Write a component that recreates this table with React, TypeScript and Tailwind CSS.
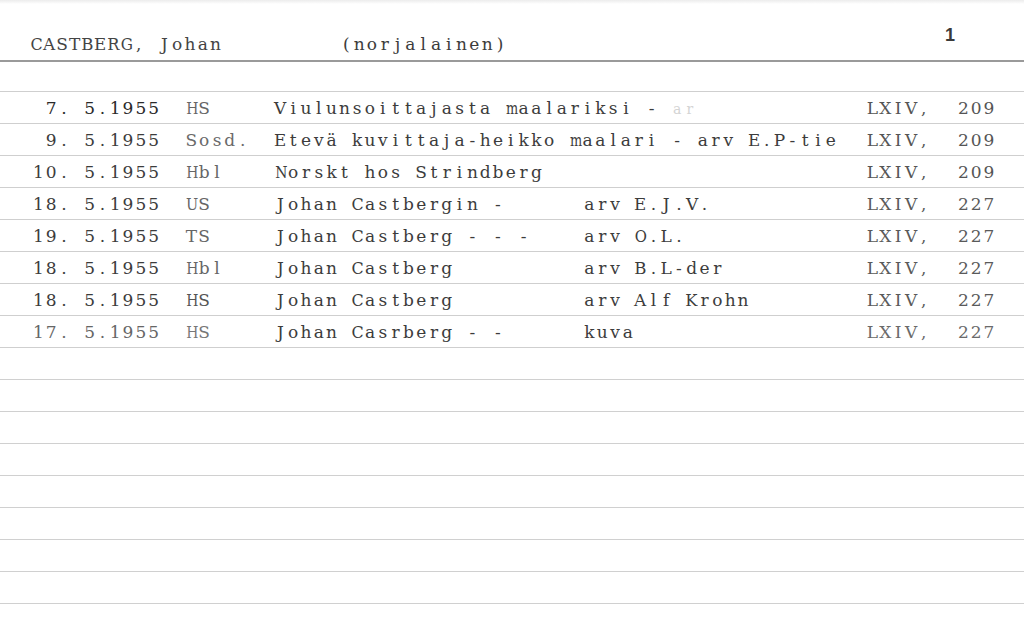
import React from "react";

const FONT_FAMILY = '"DejaVu Serif", "Liberation Serif", serif';
const serif = { fontFamily: FONT_FAMILY };

let ctx: CanvasRenderingContext2D | null = null;
const cache = new Map<string, number>();
function glyphWidth(c: string, size: number): number {
  const key = c + size;
  const hit = cache.get(key);
  if (hit !== undefined) return hit;
  if (!ctx && typeof document !== "undefined") {
    ctx = document.createElement("canvas").getContext("2d");
  }
  let w = size * 0.6;
  if (ctx) {
    ctx.font = `${size}px ${FONT_FAMILY}`;
    w = ctx.measureText(c).width;
  }
  cache.set(key, w);
  return w;
}

// typewriter-style fixed pitch: every character sits in a 12.8px cell
function T({ s, className, size = 17 }: { s: string; className?: string; size?: number }) {
  return (
    <span className={className}>
      {Array.from(s).map((c, i) => {
        const w = glyphWidth(c, size);
        const k = w > 12.2 ? 12.2 / w : 1;
        return (
          <span key={i} className="inline-block w-[12.8px] text-center">
            <span className="inline-block" style={k < 1 ? { transform: `scaleX(${k})` } : undefined}>
              {c}
            </span>
          </span>
        );
      })}
    </span>
  );
}

type Row = {
  date: string;
  src: string;
  title: string;
  faint?: string;
  arv?: string;
  vol: string;
  page: string;
  dateC?: string;
  srcC?: string;
  volC?: string;
};

const rows: Row[] = [
  { date: "7. 5.1955", src: "HS", title: "Viulunsoittajasta maalariksi - ", faint: "ar", vol: "LXIV,", page: "209", dateC: "text-[#2a2a2a]", srcC: "text-[#666]" },
  { date: "9. 5.1955", src: "Sosd.", title: "Etevä kuvittaja-heikko maalari - arv E.P-tie", vol: "LXIV,", page: "209", srcC: "text-[#6a6a6a]" },
  { date: "10. 5.1955", src: "Hbl", title: "Norskt hos Strindberg", vol: "LXIV,", page: "209", srcC: "text-[#666]" },
  { date: "18. 5.1955", src: "US", title: "Johan Castbergin -", arv: "arv E.J.V.", vol: "LXIV,", page: "227", srcC: "text-[#666]", volC: "text-[#5a5a5a]" },
  { date: "19. 5.1955", src: "TS", title: "Johan Castberg - - -", arv: "arv O.L.", vol: "LXIV,", page: "227", srcC: "text-[#666]", volC: "text-[#5a5a5a]" },
  { date: "18. 5.1955", src: "Hbl", title: "Johan Castberg", arv: "arv B.L-der", vol: "LXIV,", page: "227", srcC: "text-[#666]", volC: "text-[#5a5a5a]" },
  { date: "18. 5.1955", src: "HS", title: "Johan Castberg", arv: "arv Alf Krohn", vol: "LXIV,", page: "227", srcC: "text-[#555]", volC: "text-[#5a5a5a]" },
  { date: "17. 5.1955", src: "HS", title: "Johan Casrberg - -", arv: "kuva", vol: "LXIV,", page: "227", dateC: "text-[#666]", srcC: "text-[#777]", volC: "text-[#6a6a6a]" },
];

export default function App() {
  return (
    <div className="w-[1024px] h-[630px] overflow-hidden bg-white text-[#3c3c3c]" style={serif}>
      <div className="h-[4px] bg-gradient-to-b from-[#ececec] to-white" />
      {/* header */}
      <div className="h-[58px] border-b-2 border-[#9a9a9a] flex items-start text-[17px] leading-[32px] whitespace-pre">
        <div className="pl-[30px] w-[340px] pt-[24px] text-[#444]">
          <T s="CASTBERG, Johan" />
        </div>
        <div className="w-[605px] pt-[24px] text-[#3c3c3c]">
          <T s="(norjalainen)" />
        </div>
        <span
          className="pt-[21px] text-[18px] leading-[20px] font-bold text-[#3a3a3a]"
          style={{ fontFamily: '"Liberation Sans", Arial, sans-serif' }}
        >
          1
        </span>
      </div>
      <div className="h-[30px] border-b border-[#cfcfcf]" />
      {rows.map((r, i) => (
        <div
          key={i}
          className="h-[32px] border-b border-[#cfcfcf] grid grid-cols-[185px_89px_309px_283px_91px_1fr] text-[17px] leading-[32px] whitespace-pre"
        >
          <div className={`pr-[25px] text-right ${r.dateC ?? "text-[#3c3c3c]"}`}>
            <T s={r.date} />
          </div>
          <div className={r.srcC ?? "text-[#555]"}>
            <T s={r.src} />
          </div>
          {r.arv ? (
            <>
              <div>
                <T s={r.title} />
              </div>
              <div>
                <T s={r.arv} />
              </div>
            </>
          ) : (
            <div className="col-span-2">
              <T s={r.title} />
              {r.faint && <T s={r.faint} className="text-[#d4d4d4] text-[14px]" size={14} />}
            </div>
          )}
          <div className={r.volC ?? "text-[#555]"}>
            <T s={r.vol} />
          </div>
          <div className={r.volC ?? "text-[#555]"}>
            <T s={r.page} />
          </div>
        </div>
      ))}
      {Array.from({ length: 8 }).map((_, i) => (
        <div key={`e${i}`} className="h-[32px] border-b border-[#d0d0d0]" />
      ))}
    </div>
  );
}
